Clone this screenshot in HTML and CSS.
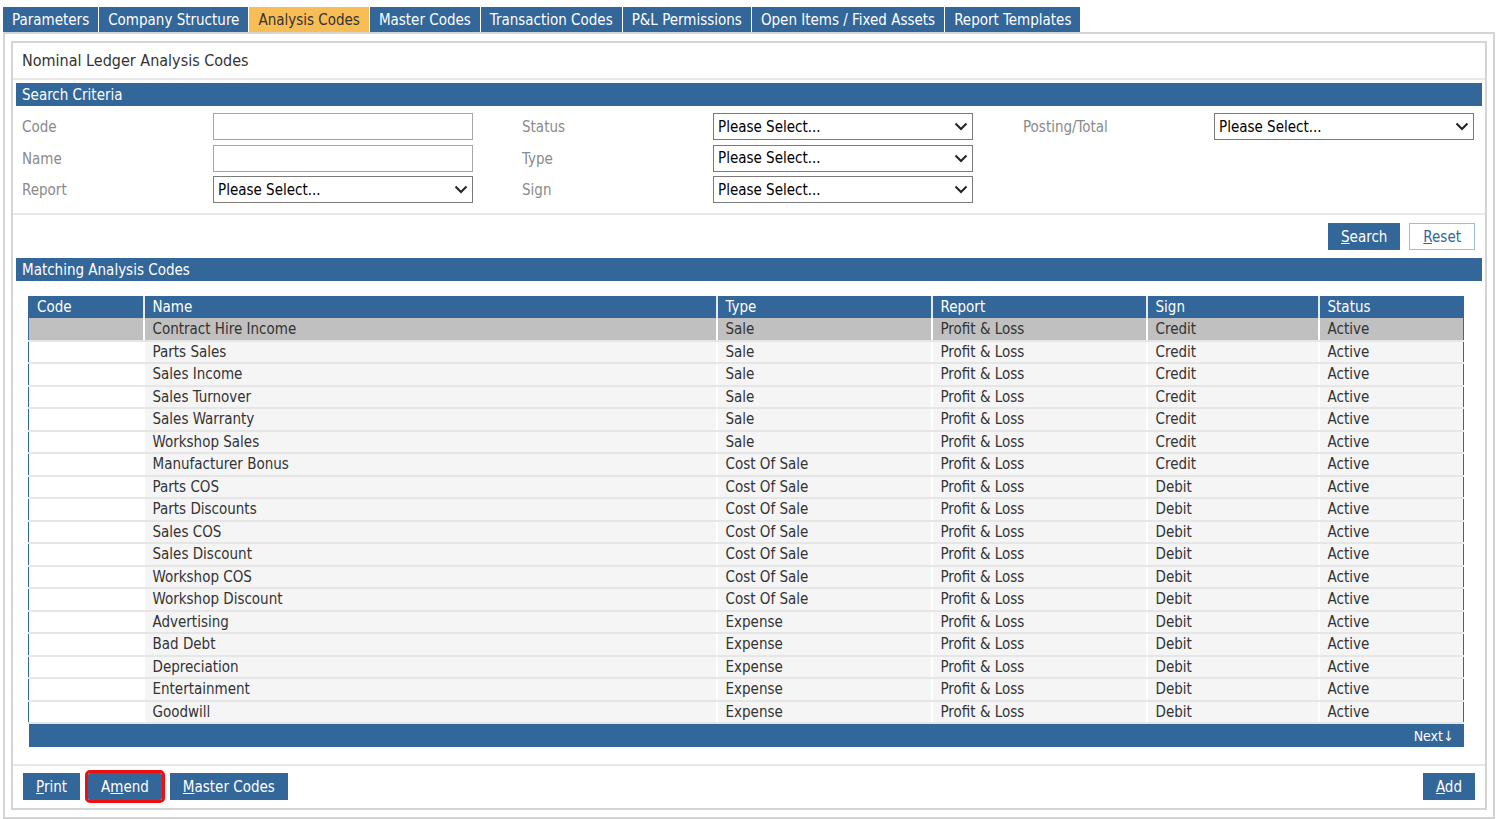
FILE: index.html
```html
<!DOCTYPE html>
<html lang="en">
<head>
    <meta charset="UTF-8">
    <title>Nominal Ledger Analysis Codes</title>
    <link rel="stylesheet" href="styles.css">
</head>
<body>
    <div class="tabs">
        <a class="tab">Parameters</a>
        <a class="tab">Company Structure</a>
        <a class="tab active">Analysis Codes</a>
        <a class="tab">Master Codes</a>
        <a class="tab">Transaction Codes</a>
        <a class="tab">P&amp;L Permissions</a>
        <a class="tab">Open Items / Fixed Assets</a>
        <a class="tab">Report Templates</a>
    </div>

    <div class="page">
        <div class="panel">
            <div class="panel-title">Nominal Ledger Analysis Codes</div>

            <div class="bar">Search Criteria</div>
            <div class="criteria">
                <div class="crit-col">
                    <label class="crit-label">Code</label>
                    <input class="field" type="text">
                    <label class="crit-label">Name</label>
                    <input class="field" type="text">
                    <label class="crit-label">Report</label>
                    <div class="select-wrap">
                        <select class="field select"><option>Please Select...</option></select>
                        <svg class="chevron" viewBox="0 0 14 9"><path d="M1.5 1.5 L7 7 L12.5 1.5" /></svg>
                    </div>
                </div>
                <div class="crit-col">
                    <label class="crit-label">Status</label>
                    <div class="select-wrap">
                        <select class="field select"><option>Please Select...</option></select>
                        <svg class="chevron" viewBox="0 0 14 9"><path d="M1.5 1.5 L7 7 L12.5 1.5" /></svg>
                    </div>
                    <label class="crit-label">Type</label>
                    <div class="select-wrap">
                        <select class="field select"><option>Please Select...</option></select>
                        <svg class="chevron" viewBox="0 0 14 9"><path d="M1.5 1.5 L7 7 L12.5 1.5" /></svg>
                    </div>
                    <label class="crit-label">Sign</label>
                    <div class="select-wrap">
                        <select class="field select"><option>Please Select...</option></select>
                        <svg class="chevron" viewBox="0 0 14 9"><path d="M1.5 1.5 L7 7 L12.5 1.5" /></svg>
                    </div>
                </div>
                <div class="crit-col">
                    <label class="crit-label">Posting/Total</label>
                    <div class="select-wrap">
                        <select class="field select"><option>Please Select...</option></select>
                        <svg class="chevron" viewBox="0 0 14 9"><path d="M1.5 1.5 L7 7 L12.5 1.5" /></svg>
                    </div>
                </div>
            </div>

            <div class="actions">
                <button class="btn"><u>S</u>earch</button>
                <button class="btn btn-light"><u>R</u>eset</button>
            </div>

            <div class="bar">Matching Analysis Codes</div>
            <div class="results">
                <table class="grid">
                    <colgroup>
                        <col style="width:115px">
                        <col style="width:573px">
                        <col style="width:215px">
                        <col style="width:215px">
                        <col style="width:172px">
                        <col style="width:145px">
                    </colgroup>
                    <thead>
                        <tr><th>Code</th><th>Name</th><th>Type</th><th>Report</th><th>Sign</th><th>Status</th></tr>
                    </thead>
                    <tbody id="rows"></tbody>
                    <tfoot>
                        <tr><td colspan="6">Next&#8595;</td></tr>
                    </tfoot>
                </table>
            </div>

            <div class="footer">
                <button class="btn"><u>P</u>rint</button>
                <button class="btn btn-focus">A<u>m</u>end</button>
                <button class="btn"><u>M</u>aster Codes</button>
                <button class="btn btn-add"><u>A</u>dd</button>
            </div>
        </div>
    </div>

    <script>
        const codes = [
            ['Contract Hire Income', 'Sale', 'Credit'],
            ['Parts Sales', 'Sale', 'Credit'],
            ['Sales Income', 'Sale', 'Credit'],
            ['Sales Turnover', 'Sale', 'Credit'],
            ['Sales Warranty', 'Sale', 'Credit'],
            ['Workshop Sales', 'Sale', 'Credit'],
            ['Manufacturer Bonus', 'Cost Of Sale', 'Credit'],
            ['Parts COS', 'Cost Of Sale', 'Debit'],
            ['Parts Discounts', 'Cost Of Sale', 'Debit'],
            ['Sales COS', 'Cost Of Sale', 'Debit'],
            ['Sales Discount', 'Cost Of Sale', 'Debit'],
            ['Workshop COS', 'Cost Of Sale', 'Debit'],
            ['Workshop Discount', 'Cost Of Sale', 'Debit'],
            ['Advertising', 'Expense', 'Debit'],
            ['Bad Debt', 'Expense', 'Debit'],
            ['Depreciation', 'Expense', 'Debit'],
            ['Entertainment', 'Expense', 'Debit'],
            ['Goodwill', 'Expense', 'Debit']
        ];

        const tbody = document.getElementById('rows');
        codes.forEach((code, index) => {
            const row = document.createElement('tr');
            if (index === 0) row.className = 'selected';
            [' ', code[0], code[1], 'Profit & Loss', code[2], 'Active'].forEach(text => {
                const cell = document.createElement('td');
                cell.textContent = text;
                row.appendChild(cell);
            });
            tbody.appendChild(row);
        });
    </script>
</body>
</html>
```

FILE: styles.css
```css
:root {
    --blue: #336699;
    --amber: #f7bd56;
    --line: #d4d4d4;
    --divider: #e8e8e8;
    --label: #8a8a8a;
}

* {
    box-sizing: border-box;
}

body {
    margin: 0;
    font-family: "DejaVu Sans Condensed", "DejaVu Sans", sans-serif;
    font-stretch: condensed;
    font-size: 14px;
    color: #333;
    background: #fff;
}

.tabs {
    display: flex;
    gap: 1px;
    padding: 7px 0 0 3px;
}

.tab {
    height: 25px;
    line-height: 26px;
    padding: 0 9px;
    font-size: 15px;
    color: #fff;
    background: var(--blue);
}

.tab.active {
    color: #333;
    background: var(--amber);
}

.page {
    margin: 0 6px 0 3px;
    padding: 7px 6px;
    border: 2px solid var(--line);
}

.panel {
    border: 2px solid var(--line);
}

.panel-title {
    height: 37px;
    padding: 0 9px;
    line-height: 36px;
    font-size: 16px;
    border-bottom: 2px solid var(--divider);
}

.bar {
    margin: 3px 3px 0;
    height: 23px;
    line-height: 24px;
    padding-left: 6px;
    font-size: 15px;
    color: #fff;
    background: var(--blue);
}

.criteria {
    display: flex;
    padding: 7px 9px 10px;
    border-bottom: 2px solid var(--divider);
}

.crit-col {
    flex: none;
    display: grid;
    grid-template-columns: 191px 260px;
    row-gap: 4.5px;
    align-content: start;
    align-items: center;
    width: 500px;
}

.crit-col + .crit-col {
    width: 501px;
}

.crit-col:last-child {
    width: auto;
}

.crit-label {
    padding-top: 1px;
    font-size: 15px;
    color: var(--label);
}

.field {
    width: 260px;
    height: 27px;
    margin: 0;
    padding: 0 4px;
    font-family: inherit;
    font-size: 15px;
    color: #000;
    background: #fff;
    border: 1px solid #a6a6a6;
    border-radius: 0;
    outline: none;
}

.select-wrap {
    position: relative;
    width: 260px;
}

.select {
    appearance: none;
    -webkit-appearance: none;
    border-color: #7a7a7a;
}

.chevron {
    position: absolute;
    right: 5px;
    top: 9px;
    width: 14px;
    height: 9px;
    pointer-events: none;
}

.chevron path {
    fill: none;
    stroke: #222;
    stroke-width: 2;
}

.actions {
    display: flex;
    justify-content: flex-end;
    gap: 9px;
    padding: 8px 10px 5px;
}

.btn {
    height: 27px;
    padding: 0 13px;
    font-family: inherit;
    font-size: 15px;
    color: #fff;
    background: var(--blue);
    border: none;
    cursor: pointer;
}

.btn-light {
    color: var(--blue);
    background: #fff;
    border: 1px solid #9dbde0;
}

.btn-focus {
    margin: 0 1px;
    outline: 3px solid #ee0f0f;
    border-radius: 2px;
}

.btn-add {
    margin-left: auto;
}

.results {
    padding: 15px 21px 0 15px;
}

.grid {
    width: 1435px;
    border-collapse: collapse;
    table-layout: fixed;
    font-size: 15px;
}

.grid th {
    height: 22px;
    padding: 0 8px;
    font-weight: normal;
    text-align: left;
    color: #fff;
    background: var(--blue);
    border-left: 2px solid #e4ebf3;
}

.grid th:first-child {
    border-left: 1px solid var(--blue);
}

.grid tbody tr {
    height: 22.5px;
}

.grid tbody td {
    padding: 0 8px;
    white-space: nowrap;
    background: #f5f5f5;
    border-left: 2px solid #fff;
    border-bottom: 2px solid #e6e6e6;
}

.grid tbody td:first-child {
    background: #fff;
    border-left: 1px solid var(--blue);
}

.grid tbody td:last-child {
    border-right: 1px solid var(--blue);
}

.grid tbody tr.selected td {
    background: #c0c0c0;
}

.grid tfoot td {
    height: 24px;
    padding: 0 10px;
    text-align: right;
    font-size: 14px;
    color: #fff;
    background: var(--blue);
}

.footer {
    display: flex;
    gap: 7px;
    margin-top: 17px;
    padding: 7px 10px 8px;
    border-top: 2px solid var(--divider);
}
```
